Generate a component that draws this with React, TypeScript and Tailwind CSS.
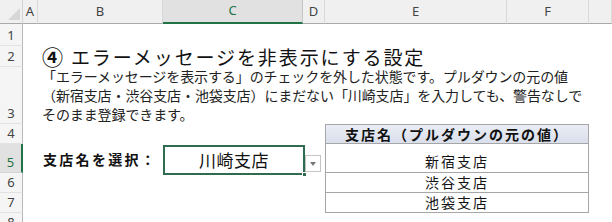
import React from 'react';

/* ── 列・行の見出し ── */
const cols = [
  { label: 'A', col: 'col-start-2' },
  { label: 'B', col: 'col-start-3' },
  { label: 'C', col: 'col-start-4', selected: true },
  { label: 'D', col: 'col-start-5' },
  { label: 'E', col: 'col-start-6' },
  { label: 'F', col: 'col-start-7' },
  { label: '', col: 'col-start-8' },
];

const rows = [
  { n: 1, row: 'row-start-2' },
  { n: 2, row: 'row-start-3' },
  { n: 3, row: 'row-start-4' },
  { n: 4, row: 'row-start-5' },
  { n: 5, row: 'row-start-6', selected: true },
  { n: 6, row: 'row-start-7' },
  { n: 7, row: 'row-start-8' },
  { n: 8, row: 'row-start-9' },
];

const jp = "font-['Noto_Sans_CJK_JP',sans-serif]";
const ui = "font-['Noto_Sans','Liberation_Sans',sans-serif]";

export default function App() {
  return (
    <div className="w-[612px] h-[222px] overflow-hidden bg-white text-[#222]">
      <div className="grid grid-cols-[23px_15px_125px_140px_22px_182px_82px_1fr] grid-rows-[24px_22px_21px_57px_20px_29px_20px_20px_20px]">
        {/* ── 左上 ── */}
        <div className="col-start-1 row-start-1 bg-[#f0f0f0] border-b border-b-[#a9a9a9] border-r border-r-[#d4d4d4] flex items-end justify-end pr-[2px] pb-[3px]">
          <div className="w-0 h-0 border-l-[12px] border-l-transparent border-b-[12px] border-b-[#d6d6d6]" />
        </div>

        {cols.map((c) => (
          <div
            key={c.col}
            className={`${c.col} row-start-1 flex items-center justify-center text-[13px] ${ui} ${
              c.selected
                ? 'bg-[#e1e1e1] text-[#217346] border-b-2 border-b-[#217346] border-r border-r-[#c6c6c6]'
                : 'bg-[#f0f0f0] text-[#444] border-b border-b-[#a9a9a9] border-r border-r-[#d9d9d9]'
            }`}
          >
            {c.label}
          </div>
        ))}

        {rows.map((r) => (
          <div
            key={r.n}
            className={`col-start-1 ${r.row} flex items-end justify-center pb-[1px] leading-[18px] text-[13px] ${ui} ${
              r.selected
                ? 'bg-[#e1e1e1] text-[#217346] border-r-2 border-r-[#217346] border-b border-b-[#d4d4d4]'
                : 'bg-[#f5f5f5] text-[#444] border-r border-r-[#b8b8b8] border-b border-b-[#e2e2e2]'
            }`}
          >
            {r.n}
          </div>
        ))}

        {/* ── 行2：タイトル ── */}
        <div className={`col-start-3 col-span-6 row-start-3 flex items-center pl-[4px] whitespace-nowrap ${jp} text-[19px] leading-[19px] tracking-[1.9px] text-[#111]`}>
          <span className="font-bold text-[21px] mr-[6px]">④</span>
          エラーメッセージを非表示にする設定
        </div>

        {/* ── 行3：説明文 ── */}
        <div className={`col-start-3 col-span-6 row-start-4 pl-[4px] ${jp} text-[14px] leading-[19px] tracking-[-0.1px] text-[#222] whitespace-nowrap`}>
          <p>「エラーメッセージを表示する」のチェックを外した状態です。プルダウンの元の値</p>
          <p>（新宿支店・渋谷支店・池袋支店）にまだない「川崎支店」を入力しても、警告なしで</p>
          <p>そのまま登録できます。</p>
        </div>

        {/* ── 行4：表見出し ── */}
        <div className={`col-start-6 col-span-2 row-start-5 flex items-center justify-center bg-gradient-to-b from-[#eaedf4] to-[#d9dfeb] border border-[#a6a6a6] ${jp} font-bold text-[14px] tracking-[2px] text-[#111]`}>
          支店名（プルダウンの元の値）
        </div>

        {/* ── 行5 ── */}
        <div className={`col-start-3 row-start-6 flex items-center pl-[5px] pt-[2px] ${jp} font-bold text-[14px] tracking-[2.3px] text-[#111]`}>
          支店名を選択：
        </div>
        <div className="col-start-4 row-start-6 relative">
          <div className={`absolute left-0 -right-[2px] top-[1px] -bottom-[2px] border-2 border-[#2f6b4f] flex items-center justify-center ${jp} text-[17px] tracking-[0.5px] text-[#111]`}>
            川崎支店
          </div>
          <div className="absolute -right-[4px] -bottom-[4px] w-[5px] h-[5px] bg-[#2f6b4f] border border-white" />
        </div>
        <div className="col-start-5 row-start-6 flex items-start pt-[11px] pl-[2px]">
          <div className="w-[16px] h-[17px] bg-white border border-[#c4c4c4] flex items-center justify-center">
            <div className="w-0 h-0 border-x-[3px] border-x-transparent border-t-[4px] border-t-[#777]" />
          </div>
        </div>
        <div className={`col-start-6 col-span-2 row-start-6 flex items-end justify-center pb-0 border-x border-b border-[#a6a6a6] ${jp} text-[14px] tracking-[2px] text-[#111]`}>
          新宿支店
        </div>

        {/* ── 行6・7 ── */}
        <div className={`col-start-6 col-span-2 row-start-7 flex items-center justify-center border-x border-b border-[#a6a6a6] ${jp} text-[14px] tracking-[2px] text-[#111]`}>
          渋谷支店
        </div>
        <div className={`col-start-6 col-span-2 row-start-8 flex items-center justify-center border-x border-b border-[#a6a6a6] ${jp} text-[14px] tracking-[2px] text-[#111]`}>
          池袋支店
        </div>
      </div>
    </div>
  );
}
